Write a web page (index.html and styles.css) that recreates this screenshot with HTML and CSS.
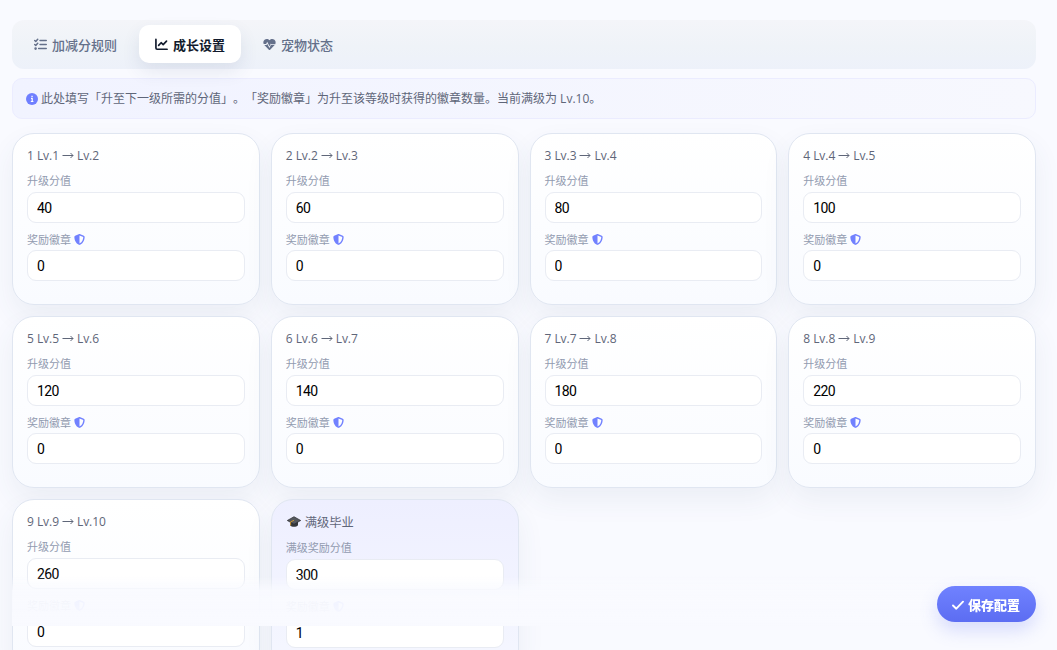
FILE: index.html
```html
<!DOCTYPE html>
<html lang="zh-CN">
<head>
    <meta charset="UTF-8">
    <title>成长设置</title>
    <meta name="viewport" content="width=device-width, initial-scale=1.0">
    <link rel="stylesheet" href="styles.css">
</head>
<body>
    <svg class="symbols" aria-hidden="true">
        <symbol id="icon-shield" viewBox="0 0 512 512">
            <path fill="currentColor" fill-rule="evenodd" d="M256 0c5 0 9 1 13 3l188 80c22 9 39 31 39 57-1 99-41 281-214 364-16 8-36 8-52 0C57 421 17 239 16 140c0-26 17-48 39-57L243 3c4-2 8-3 13-3zm0 67v378c138-67 175-215 176-303L256 67z"/>
        </symbol>
    </svg>

    <div class="page">
        <nav class="tabs">
            <button class="tab" type="button">
                <svg class="tab-icon" viewBox="0 0 14 14" fill="none" stroke="currentColor" stroke-width="1.6" stroke-linecap="round" stroke-linejoin="round">
                    <path d="M.8 2.6l1.1 1.1L4 1.3M.8 7l1.1 1.1L4 5.7M6.5 2.7h6.7M6.5 7h6.7M5 11.4h8.2"/>
                    <circle cx="1.7" cy="11.4" r=".6" fill="currentColor"/>
                </svg>
                <span>加减分规则</span>
            </button>
            <button class="tab active" type="button">
                <svg class="tab-icon" viewBox="0 0 14 14" fill="none" stroke="currentColor" stroke-width="1.8" stroke-linecap="round" stroke-linejoin="round">
                    <path d="M1 1.5v9.3c0 .8.5 1.3 1.3 1.3H13M3.9 7.9l2.7-2.8 2.2 2 3.6-3.7"/>
                </svg>
                <span>成长设置</span>
            </button>
            <button class="tab" type="button">
                <svg class="tab-icon" viewBox="0 0 14 14">
                    <path fill="currentColor" d="M7 2.5C5.6.6 3.2.6 1.7 1.9.3 3.1 0 5 .8 6.5h2.6l1.1-2.4L7 9l1.5-3 .4.7h4.3C14 5 13.7 3.1 12.3 1.9 10.8.6 8.4.6 7 2.5z"/>
                    <path fill="currentColor" d="M1.4 7.6l4.9 5c.4.4 1 .4 1.4 0l4.900-5H8.400L7 10.800 4.500 6.200l-.6 1.400z"/>
                </svg>
                <span>宠物状态</span>
            </button>
        </nav>

        <div class="tip">
            <svg class="tip-icon" viewBox="0 0 12 12">
                <circle cx="6" cy="6" r="6" fill="#6f7fff"/>
                <path d="M5 5.400h1.200v3M4.800 8.500h2.600M5.400 3.400h1.300" fill="none" stroke="#fff" stroke-width="1.200"/>
            </svg>
            <span>此处填写「升至下一级所需的分值」。「奖励徽章」为升至该等级时获得的徽章数量。当前满级为 Lv.10。</span>
        </div>

        <div class="level-grid" id="levelGrid">
            <div class="level-card max-card">
                <div class="level-title">
                    <svg class="cap-icon" viewBox="0 0 14 12">
                        <path d="M3 5v4.300c1.800 2 6.200 2 8 0V5z" fill="#35373b"/>
                        <path d="M7 .7L13.700 4.500 7 8.300.3 4.500z" fill="#55585d" stroke="#292b2f" stroke-width=".7"/>
                        <path d="M7 4.300L3.600 5.900v3.500" fill="none" stroke="#d29b32" stroke-width=".9"/>
                    </svg>
                    <span>满级毕业</span>
                </div>
                <label class="level-label">满级奖励分值</label>
                <input class="level-input" type="text" value="300">
                <label class="level-label">奖励徽章 <svg class="badge-icon"><use href="#icon-shield"/></svg></label>
                <input class="level-input" type="text" value="1">
            </div>
        </div>

        <div class="save-bar">
            <button class="save-button" type="button">
                <svg class="save-icon" viewBox="0 0 12 12" fill="none" stroke="currentColor" stroke-width="1.9" stroke-linecap="round" stroke-linejoin="round">
                    <path d="M1 6.500l3.300 3.200L11 2.700"/>
                </svg>
                <span>保存配置</span>
            </button>
        </div>
    </div>

    <script>
        const scores = [40, 60, 80, 100, 120, 140, 180, 220, 260];
        const grid = document.getElementById('levelGrid');
        const maxCard = grid.querySelector('.max-card');

        // One card per level, placed before the graduation card
        scores.forEach((score, i) => {
            const level = i + 1;
            const card = document.createElement('div');
            card.className = 'level-card';
            card.innerHTML = `
                <div class="level-title"><span>${level} Lv.${level}</span><svg class="arrow-icon" viewBox="0 0 12 8"><path d="M.5 4.500h10.500M8.500 2L11 4.500 8.500 7"/></svg><span>Lv.${level + 1}</span></div>
                <label class="level-label">升级分值</label>
                <input class="level-input" type="text" value="${score}">
                <label class="level-label">奖励徽章 <svg class="badge-icon"><use href="#icon-shield"/></svg></label>
                <input class="level-input" type="text" value="0">
            `;
            grid.insertBefore(card, maxCard);
        });
    </script>
</body>
</html>
```

FILE: styles.css
```css
* {
    box-sizing: border-box;
}

body {
    font-family: "Open Sans", "Noto Sans CJK SC", sans-serif;
    background: #f9faff;
    color: #5f6679;
    margin: 0;
    text-spacing-trim: space-all;
}

button,
input {
    font-family: inherit;
}

.symbols {
    display: none;
}

.page {
    height: 100vh;
    overflow: hidden;
    padding: 20px 21px 0 12px;
}

.tabs {
    display: flex;
    gap: 6px;
    height: 49px;
    padding: 5px 6px 6px;
    border-radius: 12px;
    background: linear-gradient(180deg, #f4f5f9 0%, #eff3f8 55%, #edf1fa 100%);
}

.tab {
    display: flex;
    align-items: center;
    gap: 5px;
    padding: 0 16px;
    border: none;
    border-radius: 10px;
    background: transparent;
    color: #64708a;
    font-size: 13px;
    font-weight: 500;
    cursor: pointer;
}

.tab.active {
    background: #fff;
    color: #111a2c;
    font-weight: 600;
    box-shadow: 0 8px 18px rgba(50, 70, 110, 0.1);
}

.tab-icon {
    width: 13px;
    height: 13px;
}

.tip {
    display: flex;
    align-items: center;
    gap: 3px;
    height: 41px;
    margin-top: 9px;
    padding: 0 13px;
    border: 1px solid #ebecff;
    border-radius: 10px;
    background: linear-gradient(90deg, #f1f3ff, #f7f8fe);
    font-size: 12px;
}

.tip span {
    padding-bottom: 1px;
}

.tip-icon {
    width: 12px;
    height: 12px;
}

.level-grid {
    display: grid;
    grid-template-columns: repeat(4, 1fr);
    gap: 11px;
    margin-top: 14px;
}

.level-card {
    height: 172px;
    padding: 13px 14px;
    border: 1px solid #e0e6f1;
    border-radius: 22px;
    background: linear-gradient(180deg, #fff, #f9fbff);
    box-shadow: 0 12px 28px rgba(60, 80, 120, 0.07);
}

.max-card {
    background: linear-gradient(180deg, #eeefff, #f5f7ff);
}

.level-title {
    display: flex;
    align-items: center;
    gap: 3px;
    height: 16px;
    margin-bottom: 6px;
    font-size: 12px;
    letter-spacing: -0.05px;
}

.max-card .level-title {
    gap: 5px;
    height: 17px;
    padding-top: 1px;
    font-size: 12.25px;
    letter-spacing: 0;
}

.arrow-icon {
    width: 12px;
    height: 8px;
    fill: none;
    stroke: currentColor;
}

.cap-icon {
    width: 14px;
    height: 12px;
    margin-left: 1px;
}

.max-card .level-title span {
    margin-left: -1px;
}

.level-label {
    display: flex;
    align-items: center;
    gap: 3px;
    height: 23px;
    color: #929bb0;
    font-size: 11px;
    line-height: 23px;
}

.badge-icon {
    width: 11px;
    height: 11px;
    color: #7181ff;
}

.level-input {
    display: block;
    width: 100%;
    height: 31px;
    padding: 0 9px;
    border: 1px solid #e9ecf3;
    border-radius: 9px;
    background: #fff;
    color: #000;
    font-family: Roboto, "Noto Sans CJK SC", sans-serif;
    font-size: 14px;
    letter-spacing: -0.6px;
    outline: none;
}

.level-input + .level-label {
    height: 27px;
    padding-top: 5px;
}

.save-bar {
    position: sticky;
    bottom: 24px;
    display: flex;
    justify-content: flex-end;
    height: 50px;
    padding-top: 10px;
    margin-top: 12px;
    background: linear-gradient(180deg, rgba(249, 250, 255, 0), rgba(249, 250, 255, 0.92) 30%, #f9faff);
}

.save-button {
    display: flex;
    align-items: center;
    gap: 4px;
    height: 36px;
    padding: 0 16px 0 15px;
    border: none;
    border-radius: 18px;
    background: linear-gradient(180deg, #7082ff, #5c6df2);
    color: #fff;
    font-size: 13px;
    font-weight: 900;
    box-shadow: 0 8px 18px rgba(92, 109, 242, 0.22);
    cursor: pointer;
}

.save-icon {
    width: 12px;
    height: 12px;
    margin-top: 1px;
}
```
